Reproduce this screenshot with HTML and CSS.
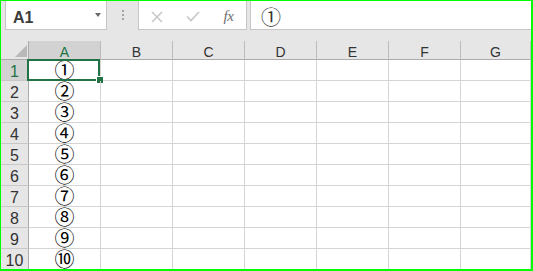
FILE: index.html
```html
<!DOCTYPE html>
<html>
<head>
<meta charset="utf-8">
<link rel="stylesheet" href="styles.css">
</head>
<body>
<div class="frame">
  <div class="fbar">
    <div class="namebox"><span class="ref">A1</span><span class="caret"></span></div>
    <div class="grip"><i></i><i></i><i></i></div>
    <div class="btns">
      <span class="btn"><svg width="12" height="12" viewBox="0 0 12 12"><path d="M1 1L11 11M11 1L1 11" stroke="#c8c8c8" stroke-width="1.6" fill="none"/></svg></span>
      <span class="btn"><svg width="14" height="11" viewBox="0 0 14 11"><path d="M1 5.5L5 9.5L13 1" stroke="#c8c8c8" stroke-width="1.6" fill="none"/></svg></span>
      <span class="btn fx">fx</span>
    </div>
    <div class="input"><span class="circ">①</span></div>
  </div>
  <div class="strip"></div>
  <div class="sheet">
    <div class="corner"><svg width="12" height="12" viewBox="0 0 12 12"><path d="M12 0V12H0Z" fill="#b9b9b9"/></svg></div>
    <div class="ch sel">A</div><div class="ch">B</div><div class="ch">C</div><div class="ch">D</div><div class="ch">E</div><div class="ch">F</div><div class="ch">G</div>

    <div class="rh sel">1</div><div class="cell a"><span class="circ">①</span><div class="selbox"><div class="handle"></div></div></div><div class="cell"></div><div class="cell"></div><div class="cell"></div><div class="cell"></div><div class="cell"></div><div class="cell"></div>
    <div class="rh">2</div><div class="cell a"><span class="circ">②</span></div><div class="cell"></div><div class="cell"></div><div class="cell"></div><div class="cell"></div><div class="cell"></div><div class="cell"></div>
    <div class="rh">3</div><div class="cell a"><span class="circ">③</span></div><div class="cell"></div><div class="cell"></div><div class="cell"></div><div class="cell"></div><div class="cell"></div><div class="cell"></div>
    <div class="rh">4</div><div class="cell a"><span class="circ">④</span></div><div class="cell"></div><div class="cell"></div><div class="cell"></div><div class="cell"></div><div class="cell"></div><div class="cell"></div>
    <div class="rh">5</div><div class="cell a"><span class="circ">⑤</span></div><div class="cell"></div><div class="cell"></div><div class="cell"></div><div class="cell"></div><div class="cell"></div><div class="cell"></div>
    <div class="rh">6</div><div class="cell a"><span class="circ">⑥</span></div><div class="cell"></div><div class="cell"></div><div class="cell"></div><div class="cell"></div><div class="cell"></div><div class="cell"></div>
    <div class="rh">7</div><div class="cell a"><span class="circ">⑦</span></div><div class="cell"></div><div class="cell"></div><div class="cell"></div><div class="cell"></div><div class="cell"></div><div class="cell"></div>
    <div class="rh">8</div><div class="cell a"><span class="circ">⑧</span></div><div class="cell"></div><div class="cell"></div><div class="cell"></div><div class="cell"></div><div class="cell"></div><div class="cell"></div>
    <div class="rh">9</div><div class="cell a"><span class="circ">⑨</span></div><div class="cell"></div><div class="cell"></div><div class="cell"></div><div class="cell"></div><div class="cell"></div><div class="cell"></div>
    <div class="rh">10</div><div class="cell a"><span class="circ">⑩</span></div><div class="cell"></div><div class="cell"></div><div class="cell"></div><div class="cell"></div><div class="cell"></div><div class="cell"></div>
  </div>
</div>
</body>
</html>
```
FILE: styles.css
```css
* { box-sizing: border-box; }
html, body { margin: 0; padding: 0; background: #fff; }

.frame {
  position: relative;
  width: 533px;
  height: 271px;
  border-style: solid;
  border-color: #00ff00;
  border-width: 1px 2px 2px 1px;
  background: #e6e6e6;
  overflow: hidden;
  font-family: "Liberation Sans", Arial, sans-serif;
}

/* formula bar */
.fbar {
  display: flex;
  height: 29px;
  padding-left: 4px;
}
.namebox {
  width: 102px;
  display: flex;
  align-items: flex-start;
  background: #fff;
  border: 1px solid #c6c6c6;
  border-top: none;
  padding: 0 5px 0 7px;
}
.ref {
  flex: 1;
  margin-top: 8px;
  font-weight: bold;
  font-size: 16px;
  line-height: 18px;
  color: #3c3c3c;
}
.caret {
  margin-top: 12px;
  width: 0;
  height: 0;
  border-left: 3.5px solid transparent;
  border-right: 3.5px solid transparent;
  border-top: 4px solid #6a6a6a;
}
.grip {
  width: 31px;
  display: flex;
  flex-direction: column;
  align-items: center;
  gap: 2px;
  padding-top: 9px;
}
.grip i {
  width: 2px;
  height: 2px;
  background: #a3a3a3;
}
.btns {
  width: 109px;
  display: flex;
  background: #fff;
  border: 1px solid #c6c6c6;
  border-top: none;
  padding-top: 3px;
}
.btn {
  width: 36px;
  display: flex;
  align-items: center;
  justify-content: center;
}
.btn:last-child { width: 35px; }
.fx {
  font-family: "Liberation Serif", "Times New Roman", serif;
  font-style: italic;
  font-size: 15px;
  color: #6e6e6e;
  letter-spacing: -0.5px;
}
.input {
  flex: 1;
  margin-left: 3px;
  background: #fff;
  border-left: 1px solid #c6c6c6;
  border-bottom: 1px solid #c6c6c6;
  display: flex;
  align-items: center;
  padding: 3px 0 0 10px;
  color: #333;
}

.circ {
  font-family: "Noto Sans CJK JP", "Noto Sans CJK SC", sans-serif;
  font-size: 20px;
  line-height: 1;
}

.strip { height: 11px; }

/* sheet */
.sheet {
  display: grid;
  grid-template-columns: 28px repeat(6, 72px) 1fr;
  grid-template-rows: 19px repeat(10, 21px);
  background: #fff;
}
.corner {
  background: #e6e6e6;
  border-right: 1px solid #ababab;
  border-bottom: 1px solid #ababab;
  display: flex;
  justify-content: flex-end;
  align-items: flex-end;
  padding: 0 1px 2px 0;
}
.corner svg { display: block; }
.ch {
  background: #e6e6e6;
  border-right: 1px solid #bcbcbc;
  border-bottom: 1px solid #ababab;
  text-align: center;
  font-size: 14px;
  line-height: 14px;
  padding-top: 4px;
  color: #333;
}
.rh {
  background: #e6e6e6;
  border-right: 1px solid #ababab;
  border-bottom: 1px solid #c8c8c8;
  text-align: center;
  font-size: 16px;
  line-height: 16px;
  padding-top: 4px;
  color: #333;
}
.sel {
  background: #d2d2d2;
  color: #217346;
}
.cell {
  border-right: 1px solid #d4d4d4;
  border-bottom: 1px solid #d4d4d4;
}
.cell.a {
  position: relative;
  display: flex;
  align-items: center;
  justify-content: center;
  color: #000;
}
.selbox {
  position: absolute;
  left: -2px;
  top: -1px;
  width: 73px;
  height: 22px;
  border: 2px solid #217346;
}
.handle {
  position: absolute;
  left: 68px;
  top: 16px;
  width: 6px;
  height: 6px;
  background: #217346;
  box-shadow: -1px -1px 0 0 #fff;
}
```
